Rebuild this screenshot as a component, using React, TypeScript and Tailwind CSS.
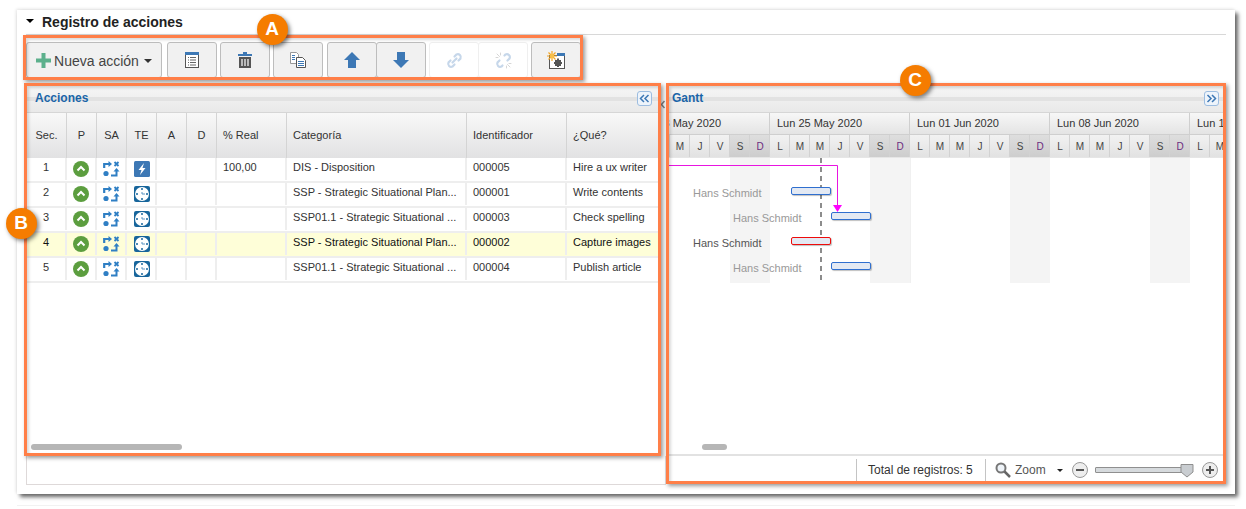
import type { ReactNode } from 'react'

const font = { fontFamily: '"Liberation Sans", Arial, sans-serif' }

const rows = [
  { n: 1, real: '100,00', cat: 'DIS - Disposition', id: '000005', que: 'Hire a ux writer', bolt: true },
  { n: 2, real: '', cat: 'SSP - Strategic Situational Plan...', id: '000001', que: 'Write contents' },
  { n: 3, real: '', cat: 'SSP01.1 - Strategic Situational ...', id: '000003', que: 'Check spelling' },
  { n: 4, real: '', cat: 'SSP - Strategic Situational Plan...', id: '000002', que: 'Capture images', active: true },
  { n: 5, real: '', cat: 'SSP01.1 - Strategic Situational ...', id: '000004', que: 'Publish article' },
]

const weeks = [
  { label: 'Lun 18 May 2020', left: 629 },
  { label: 'Lun 25 May 2020', left: 770 },
  { label: 'Lun 01 Jun 2020', left: 910 },
  { label: 'Lun 08 Jun 2020', left: 1050 },
  { label: 'Lun 15 Jun 2020', left: 1190 },
]

const letters = ['L', 'M', 'M', 'J', 'V', 'S', 'D']
const days: { x: number; l: string }[] = []
for (let i = 0; i < 42; i++) days.push({ x: 630 + i * 20, l: letters[i % 7] })

function Badge({ x, y, children }: { x: number; y: number; children: ReactNode }) {
  return (
    <div
      className="absolute z-30 flex h-[31px] w-[31px] items-center justify-center rounded-full bg-[#f57c00] text-[19px] font-bold text-white shadow-[2px_2px_4px_rgba(0,0,0,0.5)]"
      style={{ left: x - 15.5, top: y - 15.5 }}
    >
      {children}
    </div>
  )
}

function Frame({ cls }: { cls: string }) {
  return <div className={`pointer-events-none absolute z-20 border-[3px] border-[#ff7f48] shadow-[2px_2px_4px_rgba(0,0,0,0.4),inset_2px_2px_3px_rgba(0,0,0,0.15)] ${cls}`} />
}

function PriorityIcon() {
  return (
    <svg width="16" height="16" viewBox="0 0 16 16">
      <circle cx="8" cy="8" r="8" fill="#5c9e3f" />
      <path d="M4.500 9.500 8 6l3.500 3.500" fill="none" stroke="#fff" strokeWidth="2" />
    </svg>
  )
}

function StatusIcon() {
  return (
    <svg width="17" height="16" viewBox="0 0 17 16" fill="#2f7fc4" className="ml-px">
      <path d="M1.200 7V3H6" fill="none" stroke="#2f7fc4" strokeWidth="2.200" />
      <path d="M5.500 0 9 3 5.500 6z" />
      <path d="M11.500 1l4 4M15.500 1l-4 4" stroke="#2f7fc4" strokeWidth="1.800" fill="none" />
      <circle cx="3" cy="12.500" r="2.600" />
      <path d="M8 14.500h5.500V10" fill="none" stroke="#2f7fc4" strokeWidth="2" />
      <path d="M10.500 10.500 13.500 7l3 3.500z" />
    </svg>
  )
}

function TypeIcon({ bolt }: { bolt?: boolean }) {
  if (bolt) {
    return (
      <svg width="16" height="16" viewBox="0 0 16 16" className="ml-px">
        <rect width="16" height="16" rx="1.500" fill="#3d78b5" />
        <path d="M10 2 4.500 9h3L6 14l5.500-7h-3z" fill="#fff" />
      </svg>
    )
  }
  return (
    <svg width="16" height="16" viewBox="0 0 16 16" className="ml-px">
      <rect width="16" height="16" rx="2" fill="#17659b" />
      <circle cx="8" cy="8" r="7" fill="#fff" />
      <path d="M8 6v2h3" stroke="#5a94c2" strokeWidth="1" fill="none" />
      <circle cx="8" cy="3" r="1" fill="#17659b" />
      <circle cx="8" cy="13" r="1" fill="#17659b" />
      <circle cx="3" cy="8" r="1" fill="#17659b" />
      <circle cx="13" cy="8" r="1" fill="#17659b" />
    </svg>
  )
}

function ToolBtn({ left, width, children, off }: { left: number; width: number; children: ReactNode; off?: boolean }) {
  return (
    <div
      className={`absolute top-[42px] flex h-[36px] items-center justify-center rounded-[3px] border ${off ? 'border-[#efefef] bg-white' : 'border-[#bdbdbd] bg-[#f1f1f1]'}`}
      style={{ left, width }}
    >
      {children}
    </div>
  )
}

function Collapse({ left, dir }: { left: number; dir: 'l' | 'r' }) {
  return (
    <div className="absolute top-[91px] z-10 flex h-[15px] w-[15px] items-center justify-center rounded-[3px] border border-[#9dbde0] bg-[#eef4fb]" style={{ left }}>
      <svg width="11" height="9" viewBox="0 0 11 9" fill="none" stroke="#3d78b5" strokeWidth="1.500">
        {dir === 'l' ? <path d="M5 1 1.500 4.500 5 8M9.500 1 6 4.500 9.500 8" /> : <path d="M1.500 1 5 4.500 1.500 8M6 1l3.500 3.500L6 8" />}
      </svg>
    </div>
  )
}

const cols = [
  { w: 40, label: 'Sec.', center: true },
  { w: 30, label: 'P', center: true },
  { w: 30, label: 'SA', center: true },
  { w: 30, label: 'TE', center: true },
  { w: 30, label: 'A', center: true },
  { w: 30, label: 'D', center: true },
  { w: 70, label: '% Real' },
  { w: 180, label: 'Categoría' },
  { w: 100, label: 'Identificador' },
  { w: 93, label: '¿Qué?' },
]

function Cell({ w, children, center, head }: { w: number; children?: ReactNode; center?: boolean; head?: boolean }) {
  return (
    <div
      className={`flex h-full shrink-0 items-center overflow-hidden whitespace-nowrap ${head ? 'border-r border-[#d4d4d4]' : 'border-r-2 border-[#eeeeee]'} ${center ? 'justify-center' : 'pl-[6px]'}`}
      style={{ width: w }}
    >
      {children}
    </div>
  )
}

function RowText({ children }: { children: ReactNode }) {
  return <span className="relative -top-[2px]">{children}</span>
}

export default function App() {
  return (
    <div className="relative h-[509px] w-[1246px] overflow-hidden bg-white text-[#333]" style={font}>
      {/* card */}
      <div className="absolute left-[17px] top-[10px] h-[484px] w-[1218px] bg-white shadow-[3px_3px_4px_rgba(0,0,0,0.6),-1px_-1px_3px_rgba(0,0,0,0.1)]" />
      <div className="absolute left-[17px] top-[505px] h-px w-[1218px] bg-[#f2f2f2]" />

      {/* title */}
      <div className="absolute left-[26px] top-[19px] h-0 w-0 border-x-[4px] border-t-[4px] border-x-transparent border-t-black" />
      <div className="absolute left-[42px] top-[14px] text-[14px] font-bold leading-[16px] text-[#222]">Registro de acciones</div>
      <div className="absolute left-[26px] top-[34px] h-px w-[1200px] bg-[#d8d8d8]" />

      {/* toolbar */}
      <ToolBtn left={26} width={136}>
        <div className="flex items-center text-[14px] text-[#444]">
          <svg width="15" height="15" viewBox="0 0 15 15" className="mr-[3px]"><path d="M5.500 0h4v5.500H15v4H9.500V15h-4V9.500H0v-4h5.500z" fill="#5cb08c" /></svg>
          <span className="relative top-px">Nueva acción</span>
          <span className="relative top-px ml-[5px] h-0 w-0 border-x-[4px] border-t-[4px] border-x-transparent border-t-[#333]" />
        </div>
      </ToolBtn>
      <ToolBtn left={167} width={50}>
        <svg width="14" height="16" viewBox="0 0 14 16">
          <rect x=".500" y=".500" width="13" height="15" fill="#fff" stroke="#555" />
          <rect width="14" height="3" fill="#3d78b5" />
          <path d="M3 5.500h1M3 8h1M3 10.500h1M3 13h1M5 5.500h6M5 8h6M5 10.500h6M5 13h6" stroke="#666" />
        </svg>
      </ToolBtn>
      <ToolBtn left={220} width={50}>
        <svg width="14" height="16" viewBox="0 0 14 16">
          <path d="M0 2h5V0h4v2h5v2H0z" fill="#3d78b5" />
          <path d="M1 5h12v11H1z" fill="#555" />
          <path d="M4 7v7M7 7v7M10 7v7" stroke="#fff" strokeWidth="1.200" />
        </svg>
      </ToolBtn>
      <ToolBtn left={273} width={50}>
        <svg width="16" height="16" viewBox="0 0 16 16" fill="#fff">
          <path d="M.500.500h6l2 2v9h-8z" stroke="#999" />
          <path d="M6.500 5.500h6l3 3v7h-9z" stroke="#555" />
          <path d="M8 9.500h6M8 11.500h6M8 13.500h6M2 3.500h3M2 5.500h3M2 7.500h3" stroke="#3d78b5" />
        </svg>
      </ToolBtn>
      <ToolBtn left={327} width={50}>
        <svg width="16" height="16" viewBox="0 0 16 16"><path d="M8 0l8 8h-4v8H4V8H0z" fill="#3d78b5" /></svg>
      </ToolBtn>
      <ToolBtn left={376} width={50}>
        <svg width="16" height="16" viewBox="0 0 16 16"><path d="M8 16 0 8h4V0h8v8h4z" fill="#3d78b5" /></svg>
      </ToolBtn>
      <ToolBtn left={429} width={50} off>
        <svg width="17" height="17" viewBox="0 0 17 17" fill="none" stroke="#c6d7ea" strokeWidth="2.200" strokeLinecap="round">
          <path d="M6.500 10.500 10.500 6.500" />
          <path d="M8.500 4.500 10.500 2.500a3 3 0 0 1 4 4L12.500 8.500" />
          <path d="M8.500 12.500 6.500 14.500a3 3 0 0 1-4-4L4.500 8.500" />
        </svg>
      </ToolBtn>
      <ToolBtn left={478} width={50} off>
        <svg width="17" height="17" viewBox="0 0 17 17" fill="none" stroke="#c6d7ea" strokeWidth="2.200" strokeLinecap="round">
          <path d="M9.500 3.500 10.500 2.500a3 3 0 0 1 4 4L12.500 8.500" />
          <path d="M7.500 13.500 6.500 14.500a3 3 0 0 1-4-4L4.500 8.500" />
          <path d="M2 2l2.500 2.500M5.500 1v2M1 5.500h2M15 15l-2.500-2.500M11.500 16v-2M16 11.500h-2" strokeWidth="1" stroke="#d6d6d6" />
        </svg>
      </ToolBtn>
      <ToolBtn left={531} width={50}>
        <svg width="18" height="18" viewBox="0 0 18 18">
          <rect x="2.500" y="4.500" width="15" height="13" fill="#fff" stroke="#555" />
          <rect x="10" y="2" width="8" height="3" fill="#3d78b5" />
          <path d="M8 9h2V7.500h2V9h2v2h1v2h-1v2h-2v1h-2v-1H8v-2H7v-2h1z" fill="#555" />
          <path d="M5 0v10M0 5h10M1.500 1.500l7 7M8.500 1.500l-7 7" stroke="#f5a623" strokeWidth="1.200" />
          <circle cx="5" cy="5" r="2.200" fill="#f8c04a" />
        </svg>
      </ToolBtn>

      {/* acciones panel */}
      <div className="absolute left-[26px] top-[456px] h-[29px] w-[640px] border-x border-b border-[#ded9d9]" />
      <div className="absolute left-[27px] top-[86px] h-[370px] w-[632px] overflow-hidden bg-white">
        <div className="relative h-[26px] bg-gradient-to-b from-[#f6f6f6] to-[#e9e9e9]">
          <div className="absolute left-0 right-0 top-[11px] h-[4px] bg-[#e2e2e2]" />
          <div className="relative pl-[8px] pt-[5px] text-[12px] font-bold leading-[14px] text-[#1a65a8]">Acciones</div>
        </div>
        <div className="flex h-[46px] border-t border-[#d6d6d6] bg-gradient-to-b from-[#f8f8f8] to-[#e2e2e3] text-[11px] text-[#333]">
          {cols.map(c => (
            <Cell key={c.label} w={c.w} center={c.center} head>{c.label}</Cell>
          ))}
        </div>
        {rows.map(r => (
          <div key={r.n} className={`flex h-[25px] border-b-2 border-[#eeeeee] pb-px text-[11px] ${r.active ? 'bg-[#fefed8] text-[#111]' : 'text-[#333]'}`}>
            <Cell w={40} center><RowText>{r.n}</RowText></Cell>
            <Cell w={30} center><PriorityIcon /></Cell>
            <Cell w={30} center><StatusIcon /></Cell>
            <Cell w={30} center><TypeIcon bolt={r.bolt} /></Cell>
            <Cell w={30} />
            <Cell w={30} />
            <Cell w={70}><RowText>{r.real}</RowText></Cell>
            <Cell w={180}><RowText>{r.cat}</RowText></Cell>
            <Cell w={100}><RowText>{r.id}</RowText></Cell>
            <Cell w={93}><RowText>{r.que}</RowText></Cell>
          </div>
        ))}
      </div>
      <div className="absolute left-[31px] top-[444px] h-[6px] w-[151px] rounded-full bg-[#b6b6b6]" />
      <Collapse left={637} dir="l" />

      {/* splitter */}
      <svg className="absolute left-[660px] top-[100px]" width="6" height="9" viewBox="0 0 6 9"><path d="M4.500 1 1.500 4.500l3 3.500" fill="none" stroke="#888" strokeWidth="1.500" /></svg>

      {/* gantt panel */}
      <div className="absolute left-[668px] top-[86px] h-[396px] w-[556px] overflow-hidden bg-white">
        <div className="relative h-[26px] bg-gradient-to-b from-[#f6f6f6] to-[#e9e9e9]">
          <div className="absolute left-0 right-0 top-[11px] h-[4px] bg-[#e2e2e2]" />
          <div className="relative pl-[4px] pt-[5px] text-[12px] font-bold leading-[14px] text-[#1a65a8]">Gantt</div>
        </div>
        <div className="absolute left-0 top-[26px] h-[46px] w-full border-t border-[#d6d6d6] bg-[#e6e6e6]" />
        {weeks.map((w, i) => (
          <div
            key={w.label}
            className={`absolute top-[27px] flex h-[22px] items-center whitespace-nowrap border-r border-b border-[#cfcfcf] bg-gradient-to-b from-[#f7f7f7] to-[#e4e4e4] pl-[7px] text-[11px] text-[#333] ${i === 0 ? 'w-[141px]' : 'w-[140px]'}`}
            style={{ left: w.left - 668 }}
          >
            {w.label}
          </div>
        ))}
        {days.map(d => (
          <div
            key={d.x}
            className={`absolute top-[49px] flex h-[22px] w-[20px] items-center justify-center border-r border-[#d2d2d2] pl-px text-[10px] ${d.l === 'S' || d.l === 'D' ? 'bg-gradient-to-b from-[#dedede] to-[#cdcdcd]' : 'bg-gradient-to-b from-[#f2f2f2] to-[#e2e2e2]'} ${d.l === 'D' ? 'text-[#6b2d80]' : 'text-[#444]'}`}
            style={{ left: d.x - 668 }}
          >
            {d.l}
          </div>
        ))}
        {[730, 870, 1010, 1150].map(x => (
          <div key={x} className="absolute top-[72px] h-[125px] w-[40px] bg-[#f4f4f4]" style={{ left: x - 668 }} />
        ))}
        <div className="absolute left-[242px] top-[72px] h-[125px] w-px bg-[#f0f0f0]" />

        <svg className="absolute left-0 top-[72px]" width="200" height="125" viewBox="0 0 200 125">
          <path d="M153 0v125" stroke="#8c8c8c" strokeWidth="2" strokeDasharray="5 4" fill="none" />
          <path d="M0 7.500h169.500V48" stroke="#e815e0" fill="none" />
          <path d="M165 47h9l-4.500 7z" fill="#ff00ff" />
        </svg>

        <div className="absolute left-[123px] top-[101px] h-[8px] w-[40px] rounded-[2px] border border-[#2f6fcf] bg-[#e3e9f3] shadow-[1px_1px_1px_rgba(0,0,0,0.25)]" />
        <div className="absolute left-[163px] top-[126px] h-[8px] w-[40px] rounded-[2px] border border-[#2f6fcf] bg-[#e3e9f3] shadow-[1px_1px_1px_rgba(0,0,0,0.25)]" />
        <div className="absolute left-[123px] top-[151px] h-[8px] w-[40px] rounded-[2px] border border-[#ee0b0b] bg-[#e3e9f3] shadow-[1px_1px_1px_rgba(0,0,0,0.25)]" />
        <div className="absolute left-[163px] top-[176px] h-[8px] w-[40px] rounded-[2px] border border-[#2f6fcf] bg-[#e3e9f3] shadow-[1px_1px_1px_rgba(0,0,0,0.25)]" />

        <div className="absolute left-[25px] top-[100px] text-[11px] leading-[14px] text-[#999]">Hans Schmidt</div>
        <div className="absolute left-[65px] top-[125px] text-[11px] leading-[14px] text-[#999]">Hans Schmidt</div>
        <div className="absolute left-[25px] top-[150px] text-[11px] leading-[14px] text-[#555]">Hans Schmidt</div>
        <div className="absolute left-[65px] top-[175px] text-[11px] leading-[14px] text-[#999]">Hans Schmidt</div>

        <div className="absolute left-[34px] top-[358px] h-[6px] w-[25px] rounded-full bg-[#b6b6b6]" />
        <div className="absolute left-0 top-[368px] h-[2px] w-full bg-[#e2e2e2]" />

        {/* status bar */}
        <div className="absolute left-0 top-[372px] flex h-[24px] w-full items-center text-[12px] text-[#333]">
          <div className="ml-[188px] h-[23px] w-px bg-[#c4c4c4]" />
          <div className="w-[128px] pl-[11px]">Total de registros: 5</div>
          <div className="h-[23px] w-px bg-[#c4c4c4]" />
          <svg className="ml-[9px]" width="16" height="16" viewBox="0 0 16 16" fill="none">
            <circle cx="6" cy="6" r="4.500" stroke="#777" strokeWidth="2" fill="#eef3f8" />
            <path d="M9.500 9.500 15 15" stroke="#666" strokeWidth="2.500" />
          </svg>
          <span className="ml-[4px] text-[#555]">Zoom</span>
          <span className="ml-[11px] h-0 w-0 border-x-[3px] border-t-[3px] border-x-transparent border-t-[#222]" />
          <div className="ml-[9px] flex h-[16px] w-[16px] items-center justify-center rounded-full border border-[#999] bg-[#eeeeee]">
            <div className="h-[2px] w-[8px] bg-[#555]" />
          </div>
          <div className="relative ml-[7px] h-[6px] w-[95px] rounded-[1px] border border-[#8f8f8f] bg-[#d6dadd]">
            <svg className="absolute right-[-5px] top-[-5px]" width="14" height="15" viewBox="0 0 14 15"><path d="M1 1.500h12V9l-6 5-6-5z" fill="#c9cdd1" stroke="#8f8f8f" /></svg>
          </div>
          <div className="relative ml-[12px] flex h-[16px] w-[16px] items-center justify-center rounded-full border border-[#999] bg-[#eeeeee]">
            <div className="h-[2px] w-[8px] bg-[#555]" />
            <div className="absolute left-[6px] top-[3px] h-[8px] w-[2px] bg-[#555]" />
          </div>
        </div>
      </div>
      <Collapse left={1204} dir="r" />

      {/* annotations */}
      <Frame cls="left-[23px] top-[35px] h-[45px] w-[560px]" />
      <Frame cls="left-[24px] top-[83px] h-[373px] w-[637px]" />
      <Frame cls="left-[666px] top-[83px] h-[401px] w-[560px]" />
      <Badge x={272} y={29}>A</Badge>
      <Badge x={21} y={223}>B</Badge>
      <Badge x={915} y={80}>C</Badge>
    </div>
  )
}
